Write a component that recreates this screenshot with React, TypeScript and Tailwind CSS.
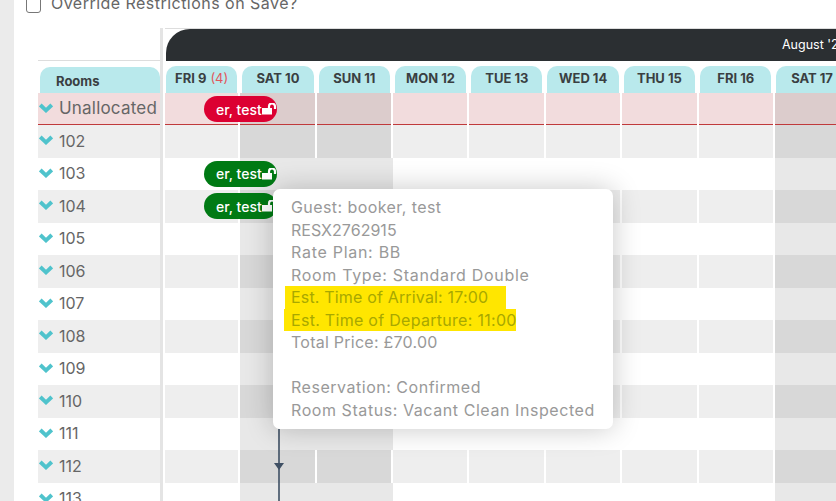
import { ReactNode } from 'react'

const days = ['FRI 9', 'SAT 10', 'SUN 11', 'MON 12', 'TUE 13', 'WED 14', 'THU 15', 'FRI 16', 'SAT 17']
const weekend = [false, true, true, false, false, false, false, false, true]
const rooms = ['102', '103', '104', '105', '106', '107', '108', '109', '110', '111', '112', '113']
const gridCols = 'grid grid-cols-[73px_75px_74px_74px_75px_74px_75px_74px_74px] gap-x-[2px] h-full'

function Chevron() {
    return (
        <svg width="14" height="10" viewBox="0 0 14 10" className="mb-[1px] shrink-0">
            <path d="M1.3 2 L7 7.4 L12.7 2" fill="none" stroke="#4fc3cc" strokeWidth="3.8" />
        </svg>
    )
}

function Booking({ color }: { color: string }) {
    return (
        <div className={`absolute left-[39px] top-[3px] z-10 flex h-[26px] w-[73px] items-center overflow-hidden rounded-full pl-[12px] text-[14px] font-medium text-white ${color}`}>
            <span>er, test</span>
            <svg width="16" height="12" viewBox="0 0 16 12" className="absolute right-0 top-[7px]">
                <rect x="1" y="5" width="10" height="6.5" fill="#fff" />
                <path d="M8 5 V3.5 A3 3 0 0 1 14 3.5 V6" fill="none" stroke="#fff" strokeWidth="2.2" />
            </svg>
        </div>
    )
}

function Row({ shade, booking }: { shade: boolean, booking?: string }) {
    return (
        <div className={gridCols}>
            {days.map((d, i) => {
                let cls = ''
                if (weekend[i]) cls = shade ? 'bg-[#d8d8d8]' : 'bg-[#e8e8e8] mr-[-2px]'
                else if (shade) cls = 'bg-[#eeeeee]'
                return <div key={d} className={cls} />
            })}
            {booking && <Booking color={booking} />}
        </div>
    )
}

function Line({ children, className = '' }: { children: ReactNode, className?: string }) {
    return <div className={`h-[22.5px] whitespace-nowrap leading-[22.5px] ${className}`}>{children}</div>
}

export default function App() {
    return (
        <div className="relative flex h-[501px] w-[836px] overflow-hidden bg-white font-['Inter',sans-serif]">
            <div className="w-[14px] shrink-0 bg-[#ebebeb]" />
            <div className="min-w-0 flex-1">
                <div className="ml-[12px] mb-[13px] -mt-[9px] flex h-[24px] items-center gap-[10px] text-[16px] tracking-[0.47px] text-[#666]">
                    <div className="mt-[3px] h-[16px] w-[15px] rounded-[3px] border border-[#777] bg-white" />
                    Override Restrictions on Save?
                </div>
                <div className="flex">
                    {/* room names */}
                    <div className="ml-[24px] w-[122px] shrink-0">
                        <div className="h-[33px] border-b border-[#dddddd]" />
                        <div className="mt-[6px] ml-[2px] h-[26px] rounded-t-[10px] bg-[#b9e9ec] pl-[16px] pt-[5px] text-[13px] font-bold text-[#3a3f42]">Rooms</div>
                        <div className="flex h-[32px] items-center gap-[6px] border-b border-[#c0393b] bg-[#f2dcdd] pl-[1px] text-[17px] tracking-[0.2px] text-[#666]">
                            <Chevron />
                            <span>Unallocated</span>
                        </div>
                        {rooms.map((r, i) => (
                            <div key={r} className={`flex h-[32.5px] items-center gap-[6px] pb-[1.5px] pl-[1px] text-[16px] text-[#666] ${i % 2 === 0 ? 'bg-[#eeeeee]' : ''}`}>
                                <Chevron />
                                <span>{r}</span>
                            </div>
                        ))}
                    </div>
                    <div className="ml-0 w-[3px] shrink-0 bg-[#e4e4e4]" />
                    {/* calendar */}
                    <div className="ml-[2px] min-w-0 flex-1">
                        <div className="h-[33px] border-t border-[#dddddd] pl-[1px]">
                            <div className="flex h-[32px] items-center rounded-tl-[24px] bg-[#2b2f32] pl-[616px] text-[12.5px] whitespace-nowrap text-white">August '24</div>
                        </div>
                        <div className="mt-[5px] ml-[1px] flex h-[27px] gap-[5px] overflow-hidden">
                            {days.map((d, i) => (
                                <div key={d} className="h-full w-[71.3px] shrink-0 rounded-t-[10px] bg-[#b9e9ec] pt-[3px] text-center text-[13px] font-bold whitespace-nowrap text-[#3a3f42]">
                                    {d}
                                    {i === 0 && <span className="ml-[4px] font-normal text-[#e0565b]">(4)</span>}
                                </div>
                            ))}
                        </div>
                        <div className="relative h-[32px]">
                            <div className={gridCols}>
                                {days.map((d, i) => (
                                    <div key={d} className={`border-b border-[#c0393b] ${weekend[i] ? 'bg-[#dccccc]' : 'bg-[#f2dcdd]'}`} />
                                ))}
                            </div>
                            <Booking color="bg-[#dc0032]" />
                        </div>
                        {rooms.map((r, i) => (
                            <div key={r} className="relative h-[32.5px]">
                                <Row shade={i % 2 === 0} booking={r === '103' || r === '104' ? 'bg-[#007a14]' : undefined} />
                            </div>
                        ))}
                    </div>
                </div>
            </div>

            {/* link line under the tooltip */}
            <svg width="12" height="72" viewBox="0 0 12 72" className="absolute left-[273px] top-[429px] z-20">
                <rect x="5.2" y="0" width="1.6" height="72" fill="#3f5064" />
                <path d="M1 34 H11 L6 41 Z" fill="#3f5064" />
            </svg>

            {/* tooltip */}
            <div className="absolute left-[273px] top-[189px] z-30 h-[240px] w-[340px] rounded-[7px] bg-white pl-[18px] pt-[7px] text-[16px] tracking-[0.57px] text-[#999] shadow-[0_0_28px_rgba(0,0,0,0.22)]">
                <Line className="tracking-[0.42px]">Guest: booker, test</Line>
                <Line className="tracking-[0.03px]">RESX2762915</Line>
                <Line className="tracking-[0.72px]">Rate Plan: BB</Line>
                <Line className="tracking-[0.68px]">Room Type: Standard Double</Line>
                <div className="-ml-[6px] h-[22.5px] w-[221px] bg-[#ffe600] pl-[6px] text-[#a8a800]"><Line className="tracking-[0.17px]">Est. Time of Arrival: 17:00</Line></div>
                <div className="-ml-[7px] h-[22.5px] w-[232px] bg-[#ffe600] pl-[7px] text-[#a8a800]"><Line className="tracking-[0.29px]">Est. Time of Departure: 11:00</Line></div>
                <Line className="tracking-[0.25px]">Total Price: £70.00</Line>
                <Line>{'\u00a0'}</Line>
                <Line className="tracking-[0.52px]">Reservation: Confirmed</Line>
                <Line>Room Status: Vacant Clean Inspected</Line>
            </div>
        </div>
    )
}
